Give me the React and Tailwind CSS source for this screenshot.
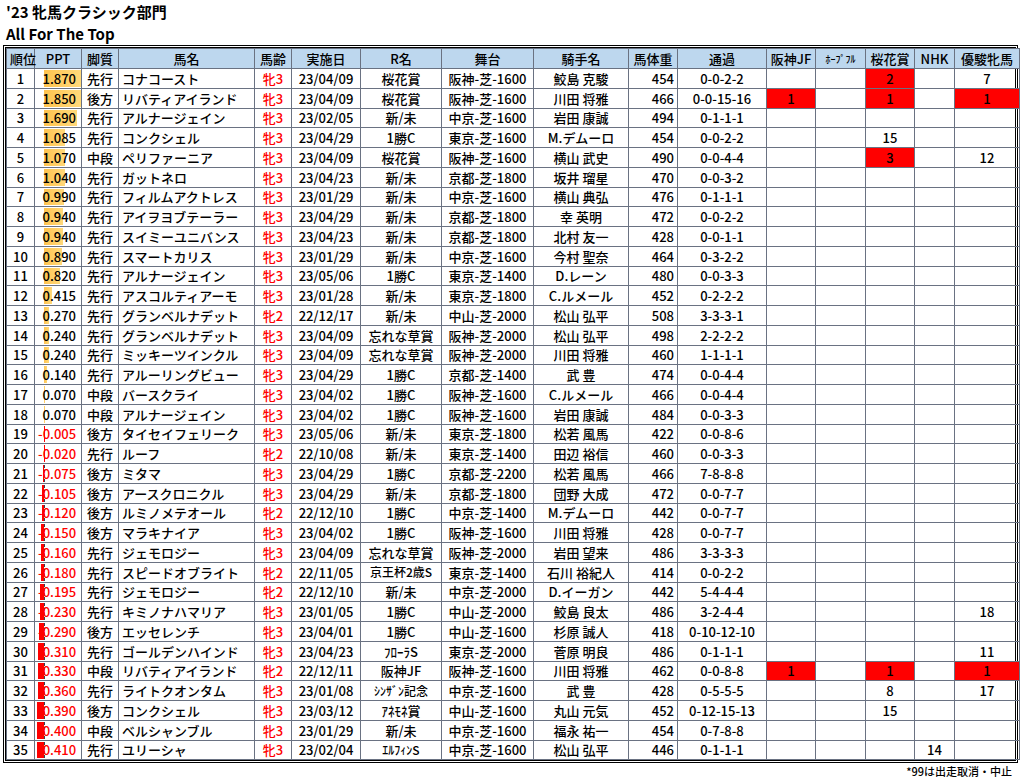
const rows = [
[1,1.870,"先行","コナコースト","牝3","23/04/09","桜花賞","阪神-芝-1600","鮫島 克駿",454,"0-0-2-2",["","","2r","","7"]],
[2,1.850,"後方","リバティアイランド","牝3","23/04/09","桜花賞","阪神-芝-1600","川田 将雅",466,"0-0-15-16",["1r","","1r","","1r"]],
[3,1.690,"先行","アルナージェイン","牝3","23/02/05","新/未","中京-芝-1600","岩田 康誠",494,"0-1-1-1",["","","","",""]],
[4,1.085,"先行","コンクシェル","牝3","23/04/29","1勝C","東京-芝-1600","M.デムーロ",454,"0-0-2-2",["","","15","",""]],
[5,1.070,"中段","ペリファーニア","牝3","23/04/09","桜花賞","阪神-芝-1600","横山 武史",490,"0-0-4-4",["","","3r","","12"]],
[6,1.040,"先行","ガットネロ","牝3","23/04/23","新/未","京都-芝-1800","坂井 瑠星",470,"0-0-3-2",["","","","",""]],
[7,0.990,"先行","フィルムアクトレス","牝3","23/01/29","新/未","中京-芝-1600","横山 典弘",476,"0-1-1-1",["","","","",""]],
[8,0.940,"先行","アイヲヨブテーラー","牝3","23/04/29","新/未","京都-芝-1800","幸 英明",472,"0-0-2-2",["","","","",""]],
[9,0.940,"先行","スイミーユニバンス","牝3","23/04/23","新/未","京都-芝-1800","北村 友一",428,"0-0-1-1",["","","","",""]],
[10,0.890,"先行","スマートカリス","牝3","23/01/29","新/未","中京-芝-1600","今村 聖奈",464,"0-3-2-2",["","","","",""]],
[11,0.820,"先行","アルナージェイン","牝3","23/05/06","1勝C","東京-芝-1400","D.レーン",480,"0-0-3-3",["","","","",""]],
[12,0.415,"先行","アスコルティアーモ","牝3","23/01/28","新/未","東京-芝-1800","C.ルメール",452,"0-2-2-2",["","","","",""]],
[13,0.270,"先行","グランベルナデット","牝2","22/12/17","新/未","中山-芝-2000","松山 弘平",508,"3-3-3-1",["","","","",""]],
[14,0.240,"先行","グランベルナデット","牝3","23/04/09","忘れな草賞","阪神-芝-2000","松山 弘平",498,"2-2-2-2",["","","","",""]],
[15,0.240,"先行","ミッキーツインクル","牝3","23/04/09","忘れな草賞","阪神-芝-2000","川田 将雅",460,"1-1-1-1",["","","","",""]],
[16,0.140,"先行","アルーリングビュー","牝3","23/04/29","1勝C","京都-芝-1400","武 豊",474,"0-0-4-4",["","","","",""]],
[17,0.070,"中段","バースクライ","牝3","23/04/02","1勝C","阪神-芝-1600","C.ルメール",466,"0-0-4-4",["","","","",""]],
[18,0.070,"中段","アルナージェイン","牝3","23/04/02","1勝C","阪神-芝-1600","岩田 康誠",484,"0-0-3-3",["","","","",""]],
[19,-0.005,"後方","タイセイフェリーク","牝3","23/05/06","新/未","東京-芝-1800","松若 風馬",422,"0-0-8-6",["","","","",""]],
[20,-0.020,"先行","ルーフ","牝2","22/10/08","新/未","東京-芝-1400","田辺 裕信",460,"0-0-3-3",["","","","",""]],
[21,-0.075,"後方","ミタマ","牝3","23/04/29","1勝C","京都-芝-2200","松若 風馬",466,"7-8-8-8",["","","","",""]],
[22,-0.105,"後方","アースクロニクル","牝3","23/04/29","新/未","京都-芝-1800","団野 大成",472,"0-0-7-7",["","","","",""]],
[23,-0.120,"後方","ルミノメテオール","牝2","22/12/10","1勝C","中京-芝-1400","M.デムーロ",442,"0-0-7-7",["","","","",""]],
[24,-0.150,"後方","マラキナイア","牝3","23/04/02","1勝C","阪神-芝-1600","川田 将雅",428,"0-0-7-7",["","","","",""]],
[25,-0.160,"先行","ジェモロジー","牝3","23/04/09","忘れな草賞","阪神-芝-2000","岩田 望来",486,"3-3-3-3",["","","","",""]],
[26,-0.180,"先行","スピードオブライト","牝2","22/11/05","京王杯2歳S","東京-芝-1400","石川 裕紀人",414,"0-0-2-2",["","","","",""]],
[27,-0.195,"先行","ジェモロジー","牝2","22/12/10","新/未","中京-芝-2000","D.イーガン",442,"5-4-4-4",["","","","",""]],
[28,-0.230,"先行","キミノナハマリア","牝3","23/01/05","1勝C","中山-芝-2000","鮫島 良太",486,"3-2-4-4",["","","","","18"]],
[29,-0.290,"後方","エッセレンチ","牝3","23/04/01","1勝C","中山-芝-1600","杉原 誠人",418,"0-10-12-10",["","","","",""]],
[30,-0.310,"先行","ゴールデンハインド","牝3","23/04/23","ﾌﾛｰﾗS","東京-芝-2000","菅原 明良",486,"0-1-1-1",["","","","","11"]],
[31,-0.330,"中段","リバティアイランド","牝2","22/12/11","阪神JF","阪神-芝-1600","川田 将雅",462,"0-0-8-8",["1r","","1r","","1r"]],
[32,-0.360,"先行","ライトクオンタム","牝3","23/01/08","ｼﾝｻﾞﾝ記念","中京-芝-1600","武 豊",428,"0-5-5-5",["","","8","","17"]],
[33,-0.390,"後方","コンクシェル","牝3","23/03/12","ｱﾈﾓﾈ賞","中山-芝-1600","丸山 元気",452,"0-12-15-13",["","","15","",""]],
[34,-0.400,"中段","ベルシャンブル","牝3","23/01/29","新/未","中京-芝-1600","福永 祐一",454,"0-7-8-8",["","","","",""]],
[35,-0.410,"先行","ユリーシャ","牝3","23/02/04","ｴﾙﾌｨﾝS","中京-芝-1600","松山 弘平",446,"0-1-1-1",["","","","14",""]],
];
const widths=[28,47,37,136,37,69,81,92,95,49,89,49,50,49,40,65];
const heads=["順位","PPT","脚質","馬名","馬齢","実施日","R名","舞台","騎手名","馬体重","通過","阪神JF","ﾎｰﾌﾟﾌﾙ","桜花賞","NHK","優駿牝馬"];
const td="border border-gray-500 px-[3px] h-[19.75px] leading-none whitespace-nowrap";
export default function App(){
  return (
    <div className="w-[1024px] h-[783px] bg-white text-[13px] text-black font-medium" style={{fontFamily:'"Noto Sans CJK JP","Liberation Sans",sans-serif'}}>
      <div className="pl-[6px] pt-[1px] text-[15px] font-bold h-[22px] leading-[22px]">'23 牝馬クラシック部門</div>
      <div className="pl-[6px] text-[15px] font-bold h-[23px] leading-[23px]">All For The Top</div>
      <div className="ml-[3px] w-[1015px] border-[3px] border-double border-black">
      <table className="border-collapse table-fixed w-full">
        <colgroup>{widths.map((w,i)=><col key={i} style={{width:w}}/>)}</colgroup>
        <thead><tr className="bg-[#bdd7ee]">{heads.map((h,i)=><th key={i} className={`${td} h-[20px] font-medium text-center ${i===12?'text-[10px]':''}`}>{h}</th>)}</tr></thead>
        <tbody>
          {rows.map(r=>{
            const p=r[1];
            return <tr key={r[0]}>
              <td className={`${td} text-center`}>{r[0]}</td>
              <td className={`${td} relative p-0`}>
                <div className="absolute top-[1px] bottom-[1px] left-[9px] border-l border-dashed border-gray-700"></div>
                {p>0 ? <div className="absolute top-[1px] bottom-[1px] left-[9px] bg-gradient-to-r from-[#ffc34d] to-[#ffd97a]" style={{width:p/1.87*37}}></div>
                 : <div className="absolute top-[1px] bottom-[1px] bg-[#ff0000]" style={{width:-p*18,left:9+p*18}}></div>}
                <span className={`relative block text-right pr-[2px] ${p<0?'text-[#ff0000]':''}`}>{p.toFixed(3)}</span>
              </td>
              <td className={`${td} text-center`}>{r[2]}</td>
              <td className={`${td} text-left`}>{r[3]}</td>
              <td className={`${td} text-center text-[#ff0000]`}>{r[4]}</td>
              <td className={`${td} text-center`}>{r[5]}</td>
              <td className={`${td} text-center ${r[6].length>5?'text-[12px]':''}`}>{r[6]}</td>
              <td className={`${td} text-center`}>{r[7]}</td>
              <td className={`${td} text-center`}>{r[8]}</td>
              <td className={`${td} text-right`}>{r[9]}</td>
              <td className={`${td} text-center`}>{r[10]}</td>
              {r[11].map((v,i)=>{const red=v.endsWith("r");return <td key={i} className={`${td} text-center ${red?'bg-[#ff0000]':''}`}>{red?v.slice(0,-1):v}</td>})}
            </tr>})}
        </tbody>
      </table>
      </div>
      <div className="text-right pr-[12px] text-[11px] leading-[14px] mt-[1px]">*99は出走取消・中止</div>
    </div>
  );
}
